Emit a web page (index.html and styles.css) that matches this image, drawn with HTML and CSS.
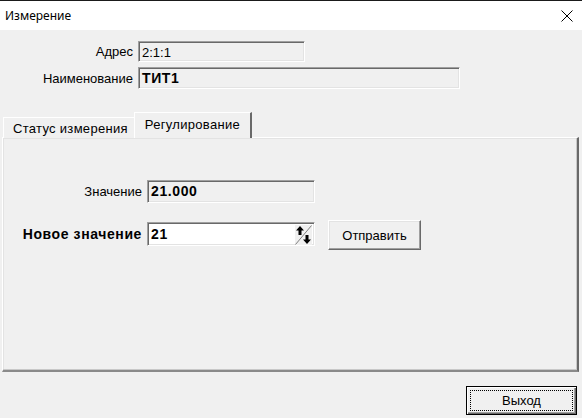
FILE: index.html
```html
<!DOCTYPE html>
<html lang="ru">
<head>
<meta charset="utf-8">
<title>Измерение</title>
<link rel="stylesheet" href="styles.css">
</head>
<body>
<div class="window">
  <div class="titlebar">
    <span class="title">Измерение</span>
    <span class="close">
      <svg width="12" height="12" viewBox="0 0 12 12"><path d="M0.5 0.5 L11.5 11.5 M11.5 0.5 L0.5 11.5" stroke="#000" stroke-width="1" fill="none"/></svg>
    </span>
  </div>
  <div class="client">
    <div class="fields">
      <label class="lbl">Адрес</label>
      <div class="edit ro addr">2:1:1</div>
      <label class="lbl">Наименование</label>
      <div class="edit ro name bold">ТИТ1</div>
    </div>
    <div class="tabs">
      <div class="tab">Статус измерения</div>
      <div class="tab active">Регулирование</div>
    </div>
    <div class="panel">
      <div class="prow first">
        <label class="lbl">Значение</label>
        <div class="edit ro val bold">21.000</div>
      </div>
      <div class="prow second">
        <label class="lbl bold">Новое значение</label>
        <div class="edit spin bold">
          <span class="spintext">21</span>
          <span class="spinner">
            <svg width="17" height="20" viewBox="0 0 17 20">
              <line x1="0.5" y1="19.5" x2="16.5" y2="0.5" stroke="#808080" stroke-width="1"/>
              <path d="M5 1 L9 5.5 L6.5 5.5 L6.5 10 L3.5 10 L3.5 5.5 L1 5.5 Z" fill="#000"/>
              <path d="M12 19 L16 14.5 L13.5 14.5 L13.5 10 L10.5 10 L10.5 14.5 L8 14.5 Z" fill="#000"/>
            </svg>
          </span>
        </div>
        <button class="btn send">Отправить</button>
      </div>
    </div>
    <div class="footer">
      <button class="btn exit"><span class="focus">Выход</span></button>
    </div>
  </div>
</div>
</body>
</html>
```

FILE: styles.css
```css
* { box-sizing: border-box; }
html, body { margin: 0; padding: 0; }
body {
  width: 582px;
  height: 418px;
  overflow: hidden;
  font-family: "Liberation Sans", Arial, sans-serif;
  font-size: 13px;
  color: #000;
  background: #f0f0f0;
}
.window {
  width: 582px;
  height: 418px;
  display: flex;
  flex-direction: column;
}
.titlebar {
  height: 30px;
  background: #fff;
  border-top: 1px solid #1a1a1a;
  display: flex;
  align-items: center;
  justify-content: space-between;
  padding: 0 9px 0 5px;
}
.title {
  font-family: "Noto Sans", "Liberation Sans", sans-serif;
  font-size: 12px;
}
.close { display: flex; }
.client {
  flex: 1;
  background: #f0f0f0;
  display: flex;
  flex-direction: column;
}
.fields {
  display: grid;
  grid-template-columns: 133px 322px;
  column-gap: 5px;
  row-gap: 5px;
  padding-top: 11px;
  align-items: center;
}
.lbl {
  text-align: right;
  white-space: nowrap;
}
.bold { font-weight: bold; font-size: 14px; letter-spacing: 0.6px; }
.edit {
  height: 22px;
  border: 1px solid;
  border-color: #a0a0a0 #fff #fff #a0a0a0;
  box-shadow: inset 1px 1px 0 #696969, inset -1px -1px 0 #e3e3e3;
  padding: 3px 0 0 3px;
  line-height: 15px;
  white-space: nowrap;
}
.ro { background: #f0f0f0; }
.addr { width: 167px; height: 21px; }
.name { width: 322px; }
.tabs {
  margin-top: 23px;
  height: 25px;
  display: flex;
  align-items: flex-end;
  padding-left: 3px;
  position: relative;
  z-index: 1;
}
.tab {
  height: 21px;
  padding: 3px 6px 0 9px;
  border-top: 1px solid #fff;
  border-left: 1px solid #fff;
  border-right: 1px solid #a0a0a0;
  white-space: nowrap;
  margin-bottom: -1px;
  background: #f0f0f0;
  letter-spacing: 0.3px;
}
.tab.active {
  height: 26px;
  padding: 4px 10px 0 10px;
  margin-left: -1px;
  border-right: 2px solid #696969;
  margin-bottom: -1px;
}
.panel {
  margin: 0 3px 0 2px;
  height: 235px;
  border-top: 1px solid #fff;
  border-left: 1px solid #fff;
  border-right: 2px solid #696969;
  border-bottom: 2px solid #8a8a8a;
  box-shadow: inset -1px -1px 0 #c8c8c8, inset 1px 1px 0 #e3e3e3;
  display: flex;
  flex-direction: column;
}
.prow {
  display: flex;
  align-items: flex-start;
}
.prow .lbl { width: 139px; margin-right: 5px; padding-top: 4px; }
.prow.first { margin-top: 42px; }
.prow.second { margin-top: 19px; }
.val { width: 168px; height: 23px; }
.spin {
  width: 168px;
  height: 24px;
  background: #fff;
  display: flex;
  justify-content: space-between;
  padding: 2px 2px 0 3px;
}
.spintext { padding-top: 2px; }
.spinner {
  width: 17px;
  height: 20px;
  display: flex;
  background: #f0f0f0;
}
.spinner svg { display: block; }
.btn {
  font-family: "Liberation Sans", Arial, sans-serif;
  font-size: 13px;
  background: #f0f0f0;
  border: 1px solid;
  border-color: #fff #696969 #696969 #fff;
  box-shadow: inset -1px -1px 0 #a0a0a0, inset 1px 1px 0 #e3e3e3;
  padding: 0;
  color: #000;
}
.send {
  margin-left: 13px;
  width: 93px;
  height: 30px;
  margin-top: -2px;
}
.footer {
  display: flex;
  justify-content: flex-end;
  padding: 14px 5px 0 0;
}
.exit {
  width: 111px;
  height: 29px;
  border: 1px solid #000;
  box-shadow: inset 1px 1px 0 #fff, inset -1px -1px 0 #696969, inset -2px -2px 0 #a0a0a0;
  padding: 3px;
}
.focus {
  display: flex;
  align-items: center;
  justify-content: center;
  height: 100%;
  border: 1px dotted #000;
}
```
